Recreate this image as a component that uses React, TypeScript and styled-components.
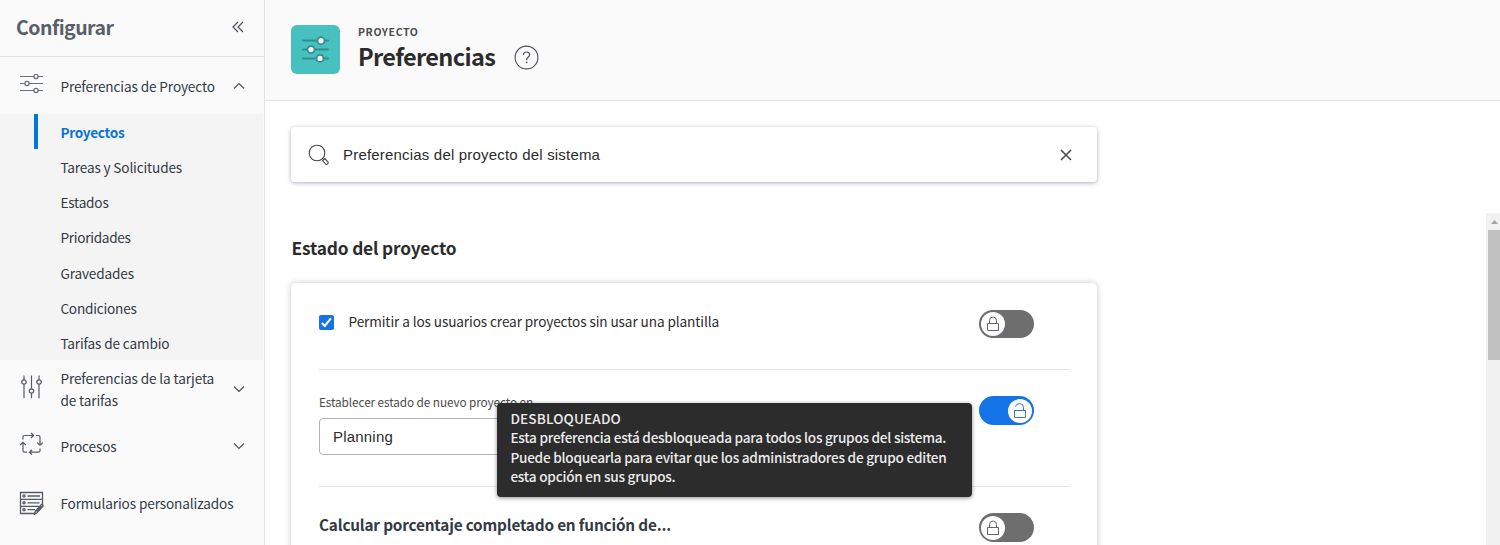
import React from 'react';
import styled, { createGlobalStyle } from 'styled-components';

const GlobalStyle = createGlobalStyle`
  * { box-sizing: border-box; }
  body { margin: 0; background: #fff; overflow: hidden; }
`;

const Page = styled.div`
  display: flex;
  height: 545px;
  overflow: hidden;
  font-family: 'Noto Sans CJK SC', 'Noto Sans', sans-serif;
  font-size: 13.6px;
  letter-spacing: -0.11px;
  color: #323a45;
`;

/* ---------- Sidebar ---------- */

const Sidebar = styled.nav`
  flex: none;
  width: 265px;
  background: #fafafa;
  border-right: 1px solid #e1e1e1;
`;

const SidebarHeader = styled.div`
  display: flex;
  align-items: center;
  justify-content: space-between;
  height: 57px;
  padding: 0 19px 2px 16px;
  border-bottom: 1px solid #e1e1e1;
`;

const SidebarTitle = styled.h2`
  margin: 0;
  font-size: 19.5px;
  font-weight: 700;
  line-height: 28px;
  letter-spacing: -0.53px;
  color: #595f69;
`;

const NavItem = styled.div<{ $height: number }>`
  display: flex;
  align-items: center;
  height: ${(p) => p.$height}px;
  padding: 0 19px 0 19px;
`;

const NavIcon = styled.span<{ $shift?: number }>`
  display: flex;
  width: 41.4px;
  margin-top: ${(p) => p.$shift ?? 0}px;
`;

const NavLabel = styled.span`
  flex: 1;
  margin-top: 1px;
  line-height: 22px;
  white-space: nowrap;
`;

const SubMenu = styled.ul`
  margin: 0 1px 0 0;
  padding: 0 0 0 34px;
  list-style: none;
  background: #f4f4f4;
`;

const SubItem = styled.li<{ $active?: boolean; $tracking: number }>`
  height: 35.2px;
  padding: 0.8px 0 0 ${(p) => (p.$active ? 22.4 : 26.4)}px;
  border-left: ${(p) => (p.$active ? '4px solid #0078d7' : 'none')};
  line-height: 34px;
  font-weight: ${(p) => (p.$active ? 700 : 400)};
  letter-spacing: ${(p) => p.$tracking}px;
  color: ${(p) => (p.$active ? '#0a73d8' : '#323a45')};
`;

/* ---------- Main ---------- */

const Main = styled.main`
  flex: 1;
  min-width: 0;
  display: flex;
  flex-direction: column;
`;

const Header = styled.header`
  flex: none;
  display: flex;
  height: 101px;
  padding: 25px 0 0 26px;
  background: #fafafa;
  border-bottom: 1px solid #e4e4e4;
`;

const Badge = styled.div`
  width: 49px;
  height: 49px;
  border-radius: 6px;
  background: #47c1bf;
`;

const Heading = styled.div`
  margin-left: 18px;
`;

const Eyebrow = styled.div`
  font-size: 10.5px;
  font-weight: 700;
  line-height: 14px;
  letter-spacing: 0.62px;
  color: #4b4b4b;
`;

const TitleRow = styled.div`
  display: flex;
  align-items: center;
  gap: 18.4px;
`;

const Title = styled.h1`
  margin: -2px 0 0;
  font-size: 23.5px;
  font-weight: 700;
  line-height: 38px;
  letter-spacing: -0.66px;
  color: #2c2c2c;
`;

const SearchArea = styled.div`
  flex: none;
  height: 112px;
  padding: 26px 0 0 26px;
`;

const SearchBox = styled.div`
  display: flex;
  align-items: center;
  width: 806px;
  height: 55px;
  padding: 0 25px 0 17px;
  border-radius: 4px;
  background: #fff;
  box-shadow: 0 1px 4px rgba(40, 55, 90, 0.4);
`;

const SearchText = styled.span`
  flex: 1;
  margin-left: 13px;
  font-family: 'Liberation Sans', Arial, sans-serif;
  font-size: 15px;
  letter-spacing: 0.19px;
  color: #2c2c2c;
`;

const ScrollArea = styled.div`
  flex: 1;
  min-height: 0;
  display: flex;
  justify-content: space-between;
`;

const Content = styled.section`
  width: 840px;
  padding: 21px 0 0 26px;
  overflow: hidden;
`;

const SectionTitle = styled.h3`
  margin: 0 0 22px 0.5px;
  font-size: 17.3px;
  font-weight: 700;
  line-height: 27px;
  letter-spacing: -0.16px;
  color: #2c2c2c;
`;

const Card = styled.div`
  width: 806px;
  height: 330px;
  padding: 0 27px 0 28px;
  border-radius: 5px;
  background: #fff;
  box-shadow: 0 0 6px rgba(40, 55, 70, 0.28);
`;

const Setting = styled.div<{ $height: number; $top: number }>`
  display: flex;
  justify-content: space-between;
  height: ${(p) => p.$height}px;
  padding: ${(p) => p.$top}px 36px 0 0;
  border-bottom: 1px solid #e6e6e6;
`;

const CheckRow = styled.label`
  display: flex;
  height: 24px;
  align-items: center;
  gap: 14.5px;
  letter-spacing: -0.1px;
  color: #2c2c2c;
`;

const CheckLabel = styled.span`
  line-height: 20px;
  padding-bottom: 2px;
`;

const CheckBox = styled.span`
  display: flex;
  width: 15px;
  height: 15px;
  border-radius: 2px;
  background: #1473e6;
`;

const Field = styled.div`
  margin-top: -3px;
`;

const FieldLabel = styled.div`
  font-size: 11.8px;
  line-height: 18px;
  letter-spacing: -0.1px;
  color: #4b4b4b;
`;

const Select = styled.div`
  display: flex;
  align-items: center;
  width: 400px;
  height: 37px;
  margin-top: 7px;
  padding-left: 13px;
  border: 1px solid #b3b3b3;
  border-radius: 4px;
  font-family: 'Liberation Sans', Arial, sans-serif;
  font-size: 15px;
  letter-spacing: 0.2px;
  color: #2c2c2c;
`;

const SettingTitle = styled.h4`
  margin: -1px 0 0;
  font-size: 15.3px;
  font-weight: 700;
  line-height: 24px;
  letter-spacing: -0.17px;
  color: #323a45;
`;

const Toggle = styled.span<{ $on?: boolean; $height?: number }>`
  display: flex;
  flex: none;
  align-items: center;
  justify-content: ${(p) => (p.$on ? 'flex-end' : 'flex-start')};
  width: 55px;
  height: ${(p) => p.$height ?? 29}px;
  padding: 0 2px;
  border-radius: 15px;
  background: ${(p) => (p.$on ? '#1473e6' : '#6e6e6e')};
`;

const Knob = styled.span`
  display: flex;
  width: 24px;
  height: 24px;
  border-radius: 50%;
  background: #fff;
`;

const Anchor = styled.div`
  position: relative;
`;

const Tooltip = styled.div`
  position: absolute;
  top: 7px;
  right: 62px;
  width: 475px;
  height: 94px;
  padding: 6px 0 0 13.4px;
  border-radius: 4px;
  background: #2c2c2c;
  box-shadow: 0 1px 4px rgba(0, 0, 0, 0.45);
  color: #ebebeb;
  font-weight: 500;
  line-height: 19.4px;
  white-space: nowrap;
`;

const TooltipLine = styled.div<{ $tracking: number }>`
  letter-spacing: ${(p) => p.$tracking}px;
`;

const ScrollBar = styled.div`
  width: 14px;
  background: #f1f1f1;
`;

const ScrollArrow = styled.div`
  display: flex;
  height: 17px;
`;

const ScrollThumb = styled.div`
  height: 130px;
  margin-left: 2px;
  background: #c1c1c1;
`;

/* ---------- Icons ---------- */

const SlidersIcon = () => (
  <svg width="25" height="20" viewBox="0 0 25 20" fill="none" stroke="#6a6f79">
    <path d="M1 2.5h13.8M19.2 2.5H24M1 9.5h4.8M10.2 9.5H24M1 16.5h13.8M19.2 16.5H24" strokeWidth="1.1" />
    <circle cx="17" cy="2.5" r="2.1" strokeWidth="1.3" />
    <circle cx="8" cy="9.5" r="2.1" strokeWidth="1.3" />
    <circle cx="17" cy="16.5" r="2.1" strokeWidth="1.3" />
  </svg>
);

const FadersIcon = () => (
  <svg width="25" height="24" viewBox="0 0 25 24" fill="none" stroke="#555b66">
    <path d="M5 .5v4.3M5 9.2v14M12.5 .5v13.3M12.5 18.2v5M20 .5v4.3M20 9.2v14" strokeWidth="1.2" />
    <circle cx="5" cy="7" r="2.2" strokeWidth="1.2" />
    <circle cx="12.5" cy="16" r="2.2" strokeWidth="1.2" />
    <circle cx="20" cy="7" r="2.2" strokeWidth="1.2" />
  </svg>
);

const CycleIcon = () => (
  <svg width="25" height="24" viewBox="0 0 25 24" fill="none" stroke="#555b66" strokeWidth="1.2">
    <path d="M4 7.5V5Q4 3.5 5.5 3.5H14M12 1l2.6 2.5L12 6" />
    <path d="M17 3.5h2.2Q21 3.5 21 5v8M18.2 10.7l2.8 2.6 2.8-2.6" />
    <path d="M21 16.5v2.2Q21 20.2 19.5 20.2H11M13 17.7l-2.6 2.5 2.6 2.5" />
    <path d="M8 20.2H5.5Q4 20.2 4 18.7v-8M1.2 13L4 10.3 6.8 13" />
  </svg>
);

const FormIcon = () => (
  <svg width="25" height="24" viewBox="0 0 25 24" fill="none" stroke="#555b66" strokeWidth="1.3">
    <path d="M16 22.5H1.5v-21h22v12.5M1.5 8.3h22M1.5 15.3h18.5" />
    <circle cx="5" cy="5" r="1.1" />
    <circle cx="5" cy="11.8" r="1.1" />
    <circle cx="5" cy="18.7" r="1.1" />
    <path d="M8.5 5h12.5M8.5 11.8h12M8.5 18.7h7.5" />
    <path d="M15.5 23.3l.9-3.2 6.1-6.8 1.7 1.5-6.2 6.9zM17.6 20.8l5-5.6" />
  </svg>
);

const Chevron = ({ up }: { up?: boolean }) => (
  <svg width="12" height="8" viewBox="0 0 12 8" fill="none" stroke="#4b505a" strokeWidth="1.2">
    <path d={up ? 'M1 6.5l5-5 5 5' : 'M1 1.5l5 5 5-5'} />
  </svg>
);

const CollapseIcon = () => (
  <svg width="14" height="12" viewBox="0 0 14 12" fill="none" stroke="#4b505a" strokeWidth="1.2">
    <path d="M7 1L2 6l5 5M12 1L7 6l5 5" />
  </svg>
);

const BadgeIcon = () => (
  <svg width="49" height="49" viewBox="0 0 49 49" fill="#fff" stroke="#328c90">
    <path d="M12 15.5h25M12 24.5h25M12 33.5h25" strokeWidth="1.9" strokeLinecap="round" />
    <circle cx="30" cy="15.7" r="3.5" strokeWidth="1.8" />
    <circle cx="20" cy="24.6" r="3.5" strokeWidth="1.8" />
    <circle cx="29" cy="33.4" r="3.5" strokeWidth="1.8" />
  </svg>
);

const HelpIcon = () => (
  <svg width="25" height="25" viewBox="0 0 25 25" fill="none" stroke="#484d57" strokeWidth="1.1">
    <circle cx="12.5" cy="12.5" r="11.4" />
    <path d="M9.4 10Q9.5 7 12.5 7t3.1 2.8q0 1.5-1.5 2.5t-1.5 2.6v.4" strokeWidth="1.2" />
    <path d="M12.6 16.7v1.5" strokeWidth="1.5" />
  </svg>
);

const SearchIcon = () => (
  <svg width="22" height="22" viewBox="0 0 22 22" fill="none" stroke="#3f444d" strokeWidth="1.1">
    <circle cx="9" cy="9" r="7.8" />
    <path d="M14.4 14.4l1.3 1.3M14.6 16.8l2.2-2.2 3.4 3.7q.3.8-.6 1.6t-1.6.4z" />
  </svg>
);

const CloseIcon = () => (
  <svg width="12" height="12" viewBox="0 0 12 12" fill="none" stroke="#4b4b4b" strokeWidth="1.6">
    <path d="M1 1l10 10M11 1L1 11" />
  </svg>
);

const CheckIcon = () => (
  <svg width="15" height="15" viewBox="0 0 15 15" fill="none" stroke="#fff" strokeWidth="2.1">
    <path d="M2.8 7.9l3 3 6.1-7.6" />
  </svg>
);

const LockIcon = ({ open }: { open?: boolean }) => (
  <svg width="24" height="24" viewBox="0 0 24 24" fill="none" stroke={open ? '#3977c4' : '#5f6571'} strokeWidth="1">
    <path d="M6.5 11.5h11v7h-11z" />
    <path d={open ? 'M7.5 7.5Q8.3 4.5 11.5 4.5q4 0 4 4v3' : 'M8.5 11.5v-3q0-3.5 3.5-3.5t3.5 3.5v3'} />
  </svg>
);

const LockToggle = ({ on, height }: { on?: boolean; height?: number }) => (
  <Toggle $on={on} $height={height}>
    <Knob>
      <LockIcon open={on} />
    </Knob>
  </Toggle>
);

const subItems: { label: string; tracking: number; active?: boolean }[] = [
  { label: 'Proyectos', tracking: -0.27, active: true },
  { label: 'Tareas y Solicitudes', tracking: -0.15 },
  { label: 'Estados', tracking: -0.2 },
  { label: 'Prioridades', tracking: -0.27 },
  { label: 'Gravedades', tracking: -0.13 },
  { label: 'Condiciones', tracking: -0.2 },
  { label: 'Tarifas de cambio', tracking: -0.13 },
];

export default function App() {
  return (
    <>
      <GlobalStyle />
      <Page>
        <Sidebar>
          <SidebarHeader>
            <SidebarTitle>Configurar</SidebarTitle>
            <CollapseIcon />
          </SidebarHeader>
          <NavItem $height={57}>
            <NavIcon $shift={-4}><SlidersIcon /></NavIcon>
            <NavLabel>Preferencias de Proyecto</NavLabel>
            <Chevron up />
          </NavItem>
          <SubMenu>
            {subItems.map((item) => (
              <SubItem key={item.label} $active={item.active} $tracking={item.tracking}>
                {item.label}
              </SubItem>
            ))}
          </SubMenu>
          <NavItem $height={57}>
            <NavIcon $shift={-4}><FadersIcon /></NavIcon>
            <NavLabel>
              Preferencias de la tarjeta
              <br />
              de tarifas
            </NavLabel>
            <Chevron />
          </NavItem>
          <NavItem $height={57}>
            <NavIcon $shift={-3}><CycleIcon /></NavIcon>
            <NavLabel>Procesos</NavLabel>
            <Chevron />
          </NavItem>
          <NavItem $height={57}>
            <NavIcon><FormIcon /></NavIcon>
            <NavLabel>Formularios personalizados</NavLabel>
          </NavItem>
        </Sidebar>
        <Main>
          <Header>
            <Badge><BadgeIcon /></Badge>
            <Heading>
              <Eyebrow>PROYECTO</Eyebrow>
              <TitleRow>
                <Title>Preferencias</Title>
                <HelpIcon />
              </TitleRow>
            </Heading>
          </Header>
          <SearchArea>
            <SearchBox>
              <SearchIcon />
              <SearchText>Preferencias del proyecto del sistema</SearchText>
              <CloseIcon />
            </SearchBox>
          </SearchArea>
          <ScrollArea>
            <Content>
              <SectionTitle>Estado del proyecto</SectionTitle>
              <Card>
                <Setting $height={87} $top={27}>
                  <CheckRow>
                    <CheckBox><CheckIcon /></CheckBox>
                    <CheckLabel>Permitir a los usuarios crear proyectos sin usar una plantilla</CheckLabel>
                  </CheckRow>
                  <LockToggle height={28} />
                </Setting>
                <Setting $height={117} $top={26}>
                  <Field>
                    <FieldLabel>Establecer estado de nuevo proyecto en</FieldLabel>
                    <Select>Planning</Select>
                  </Field>
                  <Anchor>
                    <LockToggle on />
                    <Tooltip role="tooltip">
                      <TooltipLine $tracking={0.13}>DESBLOQUEADO</TooltipLine>
                      <TooltipLine $tracking={-0.25}>Esta preferencia está desbloqueada para todos los grupos del sistema.</TooltipLine>
                      <TooltipLine $tracking={-0.245}>Puede bloquearla para evitar que los administradores de grupo editen</TooltipLine>
                      <TooltipLine $tracking={-0.22}>esta opción en sus grupos.</TooltipLine>
                    </Tooltip>
                  </Anchor>
                </Setting>
                <Setting $height={126} $top={26}>
                  <SettingTitle>Calcular porcentaje completado en función de...</SettingTitle>
                  <LockToggle />
                </Setting>
              </Card>
            </Content>
            <ScrollBar>
              <ScrollArrow>
                <svg width="14" height="17" viewBox="0 0 14 17" fill="#a3a3a3">
                  <path d="M5 11l3.5-4 3.5 4z" />
                </svg>
              </ScrollArrow>
              <ScrollThumb />
            </ScrollBar>
          </ScrollArea>
        </Main>
      </Page>
    </>
  );
}
